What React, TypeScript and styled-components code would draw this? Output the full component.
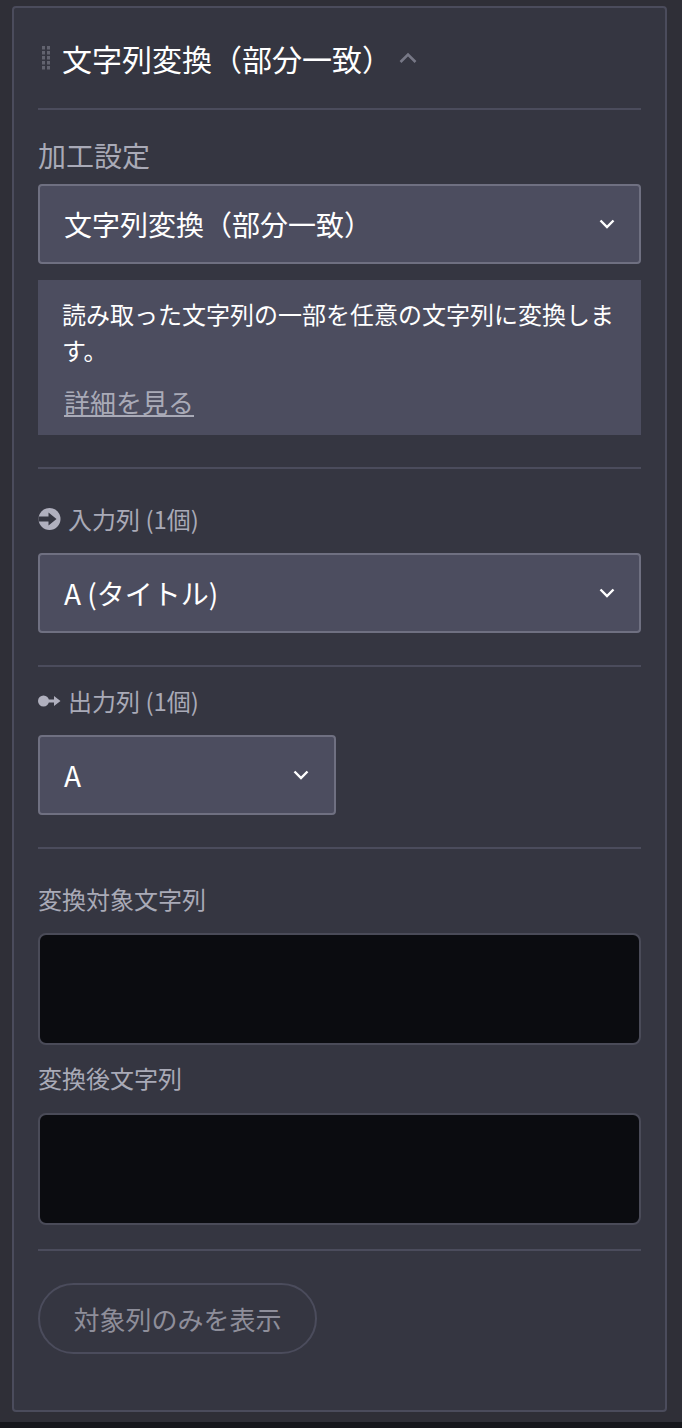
import React from 'react'
import styled, { createGlobalStyle } from 'styled-components'

const GlobalStyle = createGlobalStyle`
  html, body {
    margin: 0;
    padding: 0;
    background: #2f2f37;
  }
  * {
    box-sizing: border-box;
  }
`

const Page = styled.div`
  width: 682px;
  height: 1428px;
  display: flex;
  flex-direction: column;
  overflow: hidden;
  font-family: "Noto Sans CJK JP", "Noto Sans", sans-serif;
  background: #2f2f37;
`

const Panel = styled.section`
  width: 655px;
  height: 1406px;
  margin: 6px 0 0 12px;
  padding: 0 24px;
  background: #353641;
  border: 2px solid #4b4c5c;
  border-radius: 4px;
`

const BottomBand = styled.div`
  flex: 1;
  margin-top: 10px;
  background: #16171c;
`

const Header = styled.header`
  height: 102px;
  display: flex;
  align-items: center;
  gap: 12px;
  padding: 0 0 0 4px;
  border-bottom: 2px solid #4b4c5c;
`

const Title = styled.h2`
  margin: 0;
  font-size: 30px;
  line-height: 40px;
  font-weight: 400;
  color: #fff;
`

const CollapseIcon = styled.svg`
  width: 20px;
  height: 14px;
  margin-left: -6px;
`

const Section = styled.div`
  padding-bottom: 32px;
  border-bottom: 2px solid #4b4c5c;
`

const SettingLabel = styled.div`
  height: 74px;
  padding-top: 25px;
  font-size: 28px;
  line-height: 40px;
  color: #a9aab7;
`

const FieldLabel = styled.div<{ $compact?: boolean }>`
  display: flex;
  align-items: center;
  gap: 7px;
  height: ${p => (p.$compact ? '68px' : '84px')};
  padding-top: ${p => (p.$compact ? '0' : '16px')};
  font-size: 24px;
  line-height: 34px;
  color: #a9aab7;
`

const Select = styled.div<{ $narrow?: boolean }>`
  width: ${p => (p.$narrow ? '298px' : '100%')};
  height: 80px;
  display: flex;
  align-items: center;
  justify-content: space-between;
  padding: 0 24px;
  background: #4c4d5f;
  border: 2px solid #6f7081;
  border-radius: 4px;
  font-size: 28px;
  line-height: 40px;
  color: #fff;
`

const Note = styled.div`
  margin-top: 16px;
  height: 155px;
  padding: 16px 24px 0;
  background: #4c4d5f;
  font-size: 24px;
  line-height: 36px;
  color: #fff;
`

const NoteLink = styled.a`
  display: block;
  margin-top: 15px;
  margin-left: 2px;
  font-size: 26px;
  line-height: 38px;
  color: #a9aab7;
  text-decoration: underline;
`

const TextLabel = styled.div`
  height: 34px;
  font-size: 24px;
  line-height: 34px;
  color: #a9aab7;
`

const TextBox = styled.div`
  height: 112px;
  background: #0b0c10;
  border: 2px solid #4a4b58;
  border-radius: 8px;
`

const TextFields = styled.div`
  padding-top: 33px;
  padding-bottom: 24px;
  border-bottom: 2px solid #4b4c5c;
`

const FirstTextLabel = styled(TextLabel)`
  margin-bottom: 17px;
`

const SecondTextLabel = styled(TextLabel)`
  margin-top: 16px;
  margin-bottom: 18px;
`

const Footer = styled.div`
  padding-top: 32px;
`

const PillButton = styled.button`
  width: 279px;
  height: 71px;
  padding: 0;
  background: transparent;
  border: 2px solid #4b4c5c;
  border-radius: 36px;
  font-family: inherit;
  font-size: 26px;
  color: #8e8e9a;
`

const ChevronIcon = styled.svg<{ $nudge?: boolean }>`
  margin-right: ${p => (p.$nudge ? '1px' : '0')};
`

const Chevron = ({ nudge }: { nudge?: boolean }) => (
  <ChevronIcon $nudge={nudge} width="16" height="10" viewBox="0 0 16 10" fill="none">
    <path d="M1.5 1.5 8 8l6.5-6.5" stroke="#fff" strokeWidth="2.4" />
  </ChevronIcon>
)

const DragHandle = () => (
  <svg width="8" height="24" viewBox="0 0 8 24" fill="#62636f">
    {[0, 5].map(x =>
      [0, 5, 10, 15, 20].map(y => <rect key={`${x}-${y}`} x={x} y={y} width="3" height="3.5" />),
    )}
  </svg>
)

const InputIcon = () => (
  <svg width="23" height="22" viewBox="0 0 22 22">
    <circle cx="11" cy="11" r="11" fill="#b0b0be" />
    <path d="M0 8.5h10V4.5l8 6.5-8 6.5v-4H0z" fill="#353641" />
  </svg>
)

const OutputIcon = () => (
  <svg width="23" height="14" viewBox="0 0 23 14" fill="#b0b0be">
    <circle cx="5.5" cy="7" r="5.5" />
    <path d="M10 5.5h6V2l6.5 5-6.5 5V8.5h-6z" />
  </svg>
)

export default function App() {
  return (
    <Page>
      <GlobalStyle />
      <Panel>
        <Header>
          <DragHandle />
          <Title>文字列変換（部分一致）</Title>
          <CollapseIcon viewBox="0 0 20 14" fill="none">
            <path d="M2.5 11 10 3.5l7.5 7.5" stroke="#777886" strokeWidth="2.6" />
          </CollapseIcon>
        </Header>

        <Section>
          <SettingLabel>加工設定</SettingLabel>
          <Select>
            文字列変換（部分一致）
            <Chevron />
          </Select>
          <Note>
            読み取った文字列の一部を任意の文字列に変換します。
            <NoteLink>詳細を見る</NoteLink>
          </Note>
        </Section>

        <Section>
          <FieldLabel>
            <InputIcon />
            入力列 (1個)
          </FieldLabel>
          <Select>
            A (タイトル)
            <Chevron />
          </Select>
        </Section>

        <Section>
          <FieldLabel $compact>
            <OutputIcon />
            出力列 (1個)
          </FieldLabel>
          <Select $narrow>
            A
            <Chevron nudge />
          </Select>
        </Section>

        <TextFields>
          <FirstTextLabel>変換対象文字列</FirstTextLabel>
          <TextBox />
          <SecondTextLabel>変換後文字列</SecondTextLabel>
          <TextBox />
        </TextFields>

        <Footer>
          <PillButton>対象列のみを表示</PillButton>
        </Footer>
      </Panel>
      <BottomBand />
    </Page>
  )
}
